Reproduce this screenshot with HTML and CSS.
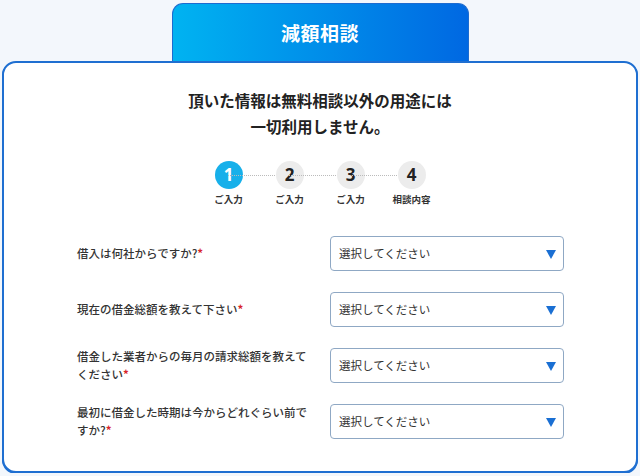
FILE: index.html
```html
<!DOCTYPE html>
<html lang="ja">
<head>
  <meta charset="UTF-8">
  <title>減額相談</title>
  <link rel="stylesheet" href="styles.css">
</head>
<body>
  <div class="page">
    <div class="tab">減額相談</div>
    <div class="card">
      <p class="lead">頂いた情報は無料相談以外の用途には<br>一切利用しません。</p>

      <ol class="steps">
        <li class="step active"><span class="num">1</span><span class="cap">ご入力</span></li>
        <li class="step"><span class="num">2</span><span class="cap">ご入力</span></li>
        <li class="step"><span class="num">3</span><span class="cap">ご入力</span></li>
        <li class="step"><span class="num">4</span><span class="cap">相談内容</span></li>
      </ol>

      <div class="form">
        <div class="row">
          <label class="q">借入は何社からですか?<span class="req">*</span></label>
          <div class="select">選択してください<span class="arrow"></span></div>
        </div>
        <div class="row">
          <label class="q">現在の借金総額を教えて下さい<span class="req">*</span></label>
          <div class="select">選択してください<span class="arrow"></span></div>
        </div>
        <div class="row">
          <label class="q">借金した業者からの毎月の請求総額を教えてください<span class="req">*</span></label>
          <div class="select">選択してください<span class="arrow"></span></div>
        </div>
        <div class="row">
          <label class="q">最初に借金した時期は今からどれぐらい前ですか?<span class="req">*</span></label>
          <div class="select">選択してください<span class="arrow"></span></div>
        </div>
      </div>
    </div>
  </div>
</body>
</html>
```

FILE: styles.css
```css
html {
  background: #f3f7fc;
}
body {
  margin: 0;
  font-family: "Noto Sans CJK JP", "Noto Sans", sans-serif;
  color: #222;
}
.page {
  padding: 3px 2px 0;
}
.tab {
  width: 297px;
  height: 58px;
  margin: 0 auto;
  box-sizing: border-box;
  border: 1px solid #1c6bd0;
  border-bottom: 0;
  border-radius: 11px 11px 0 0;
  background: linear-gradient(90deg, #00b3f1, #0068e2);
  color: #fff;
  font-size: 19px;
  font-weight: 700;
  line-height: 58px;
  text-align: center;
  letter-spacing: 0.5px;
}
.card {
  height: 412px;
  box-sizing: border-box;
  background: #fff;
  border: 2px solid #1f6fd1;
  border-radius: 14px;
  box-shadow: 0 1px 0 #1f6fd1;
  padding-top: 24px;
}
.lead {
  margin: 0;
  text-align: center;
  font-size: 15.5px;
  font-weight: 700;
  line-height: 26px;
  color: #222;
}
.steps {
  list-style: none;
  display: flex;
  justify-content: center;
  margin: 22px 0 0;
  padding: 0 0 0 0;
}
.step {
  position: relative;
  width: 61px;
  display: flex;
  flex-direction: column;
  align-items: center;
}
.step + .step::before {
  content: "";
  position: absolute;
  top: 14px;
  right: 45px;
  width: 47px;
  border-top: 1px dotted #bbb;
}
.num {
  width: 28px;
  height: 28px;
  border-radius: 50%;
  background: #ececec;
  color: #222;
  font-family: "Noto Sans", sans-serif;
  font-size: 17px;
  font-weight: 700;
  line-height: 28px;
  text-align: center;
}
.step.active .num {
  background: #17b0ea;
  color: #fff;
}
.cap {
  margin-top: 3px;
  font-size: 9.5px;
  font-weight: 700;
  color: #333;
}
.form {
  margin: 19px 0 0;
  padding: 0 72px 0 73px;
}
.row {
  display: flex;
  align-items: center;
  justify-content: space-between;
  height: 56px;
}
.q {
  width: 240px;
  font-size: 11.5px;
  font-weight: 500;
  line-height: 18px;
  color: #333;
}
.req {
  color: #d8262b;
  font-weight: 700;
  line-height: 1;
}
.select {
  position: relative;
  width: 234px;
  height: 35px;
  box-sizing: border-box;
  border: 1px solid #8fa8c4;
  border-radius: 4px;
  padding-left: 8px;
  font-size: 11.5px;
  line-height: 33px;
  color: #333;
}
.arrow {
  position: absolute;
  right: 7px;
  top: 13px;
  width: 0;
  height: 0;
  border-left: 5px solid transparent;
  border-right: 5px solid transparent;
  border-top: 9px solid #1a6fd3;
}
```
